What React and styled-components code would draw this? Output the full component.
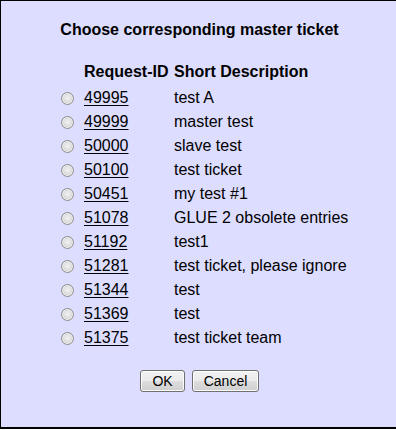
import React from "react";
import styled, { createGlobalStyle } from "styled-components";

const GlobalStyle = createGlobalStyle`
  html, body {
    margin: 0;
    padding: 0;
    background: #ffffff;
    overflow: hidden;
  }
  body {
    font-family: "Liberation Sans", Arial, sans-serif;
  }
`;

// dialog panel
const Panel = styled.div`
  box-sizing: border-box;
  width: 396px;
  height: 429px;
  background-color: #ddddff;
  border-top: 1px solid #000;
  border-left: 1px solid #000;
  border-bottom: 2px solid #000;
  color: #000;
  padding-top: 20px;
`;

const Title = styled.h2`
  margin: 0;
  font-size: 16px;
  line-height: 18px;
  font-weight: bold;
  text-align: center;
  padding-left: 2px;
`;

const Table = styled.div`
  display: grid;
  grid-template-columns: 24px 90px auto;
  margin: 24px 0 0 59px;
`;

const HeadCell = styled.div`
  font-size: 16px;
  font-weight: bold;
  line-height: 18px;
  height: 18px;
  padding-bottom: 5px;
`;

const Cell = styled.div`
  height: 24px;
  display: flex;
  align-items: center;
  font-size: 16px;
  white-space: nowrap;
`;

const Radio = styled.input.attrs({ type: "radio" })`
  appearance: none;
  -webkit-appearance: none;
  margin: 1px 0 0 1px;
  width: 13px;
  height: 13px;
  border-radius: 50%;
  border: 1px solid #8e8e8e;
  box-sizing: border-box;
  background: radial-gradient(circle at 50% 45%, #f2f2f2 0%, #e2e2e2 40%, #cfcfcf 75%, #f0f0f0 100%);
  box-shadow: inset 0 0 0 1px #ececec;
`;

const IdLink = styled.a`
  color: #000;
  text-decoration: underline;
  text-underline-offset: 2px;
  cursor: pointer;
`;

const Buttons = styled.div`
  display: flex;
  justify-content: center;
  gap: 7px;
  margin-top: 20px;
  padding-left: 2px;
`;

const Button = styled.button`
  box-sizing: border-box;
  height: 22px;
  width: ${(p) => p.w}px;
  padding: 0;
  font-family: "Liberation Sans", Arial, sans-serif;
  font-size: 14px;
  color: #000;
  border: 1px solid #707070;
  border-radius: 3px;
  background: linear-gradient(#f2f2f2 0%, #ebebeb 50%, #dddddd 51%, #cfcfcf 100%);
  box-shadow: inset 0 0 0 1px #fcfcfc;
`;

const tickets = [
  ["49995", "test A"],
  ["49999", "master test"],
  ["50000", "slave test"],
  ["50100", "test ticket"],
  ["50451", "my test #1"],
  ["51078", "GLUE 2 obsolete entries"],
  ["51192", "test1"],
  ["51281", "test ticket, please ignore"],
  ["51344", "test"],
  ["51369", "test"],
  ["51375", "test ticket team"],
];

const App = () => {
  return (
    <>
      <GlobalStyle />
      <Panel>
        <Title>Choose corresponding master ticket</Title>
        <Table>
          <HeadCell />
          <HeadCell>Request-ID</HeadCell>
          <HeadCell>Short Description</HeadCell>
          {tickets.map(([id, desc]) => (
            <React.Fragment key={id}>
              <Cell>
                <Radio name="master" value={id} />
              </Cell>
              <Cell>
                <IdLink>{id}</IdLink>
              </Cell>
              <Cell>{desc}</Cell>
            </React.Fragment>
          ))}
        </Table>
        <Buttons>
          <Button w={45}>OK</Button>
          <Button w={67}>Cancel</Button>
        </Buttons>
      </Panel>
    </>
  );
};

export default App;
